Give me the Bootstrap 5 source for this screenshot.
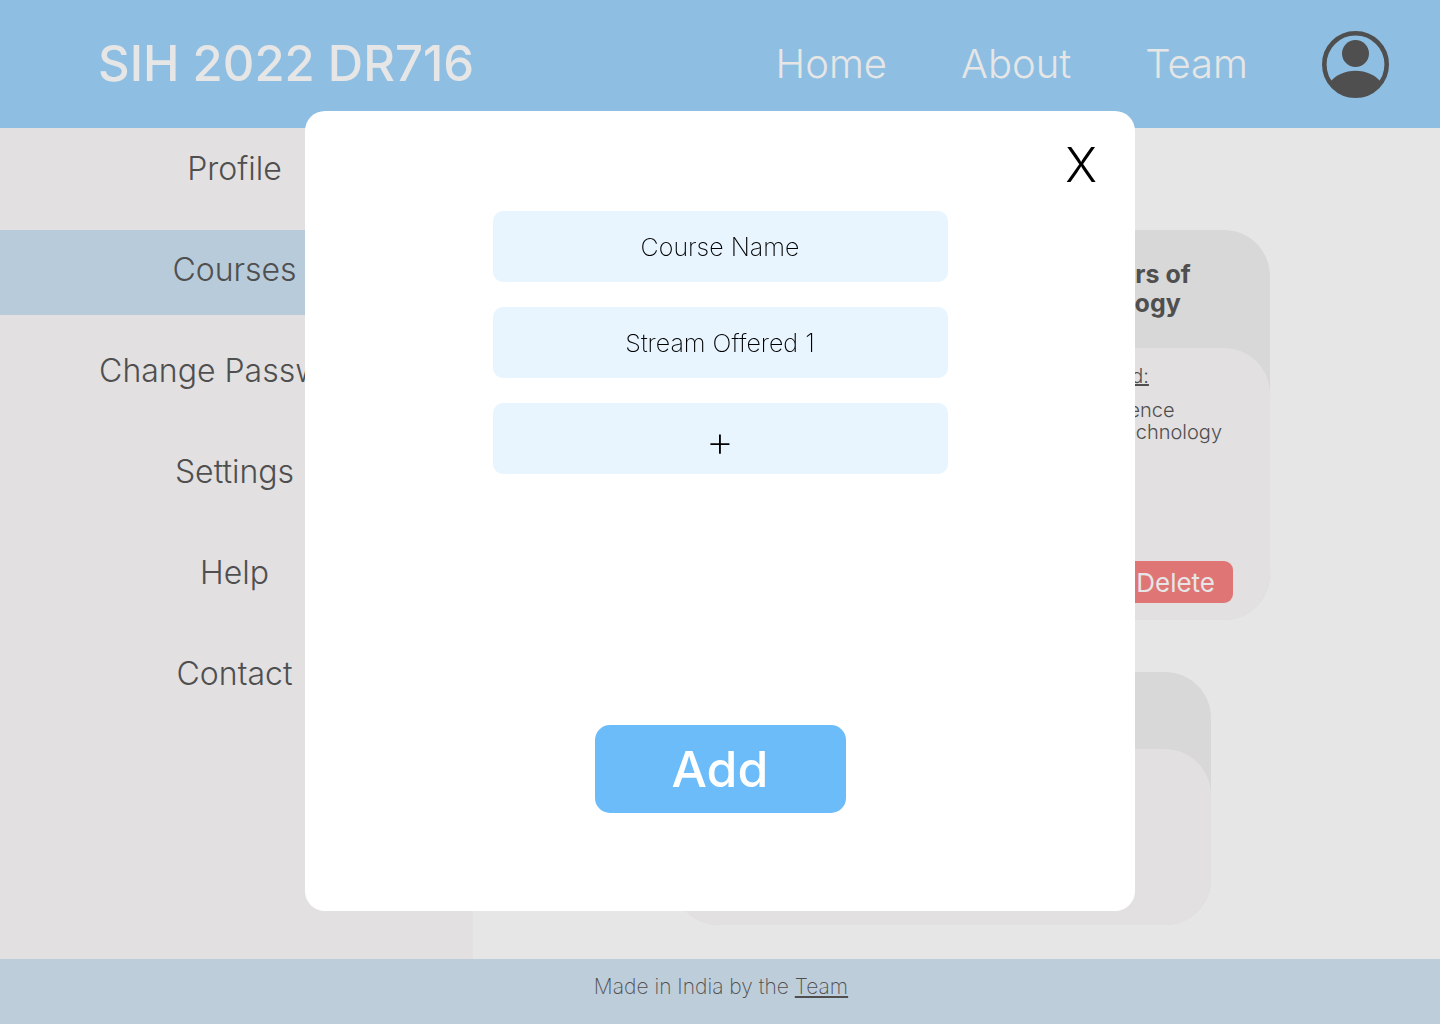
<!DOCTYPE html>
<html lang="en">
<head>
<meta charset="utf-8">
<meta name="viewport" content="width=device-width, initial-scale=1">
<title>SIH 2022 DR716 - Courses</title>
<link href="https://cdn.jsdelivr.net/npm/bootstrap@5.3.0/dist/css/bootstrap.min.css" rel="stylesheet">
<style>
  body { font-family: "Inter", "Open Sans", sans-serif; background: #e6e6e6; color: #4f4f4f; }
  a { color: inherit; }
  .top-bar { background: #8ebfe3; min-height: 128px; padding: 0 51px 0 98px; }
  .top-bar .navbar-brand { color: #e6e6e6; font-size: 49px; font-weight: 500; line-height: 60px; }
  .top-links { gap: 74px; }
  .top-links .nav-link { color: #e6e6e6; font-size: 40px; font-weight: 300; line-height: 44px; }
  .side-menu { width: 473px; flex: none; background: #e2e0e1; gap: 16px; padding-top: 1px; }
  .side-menu .nav-link { color: #4f4f4f; font-size: 32px; font-weight: 300; line-height: 38px; padding: 21px 4px 26px 0; }
  .side-menu .nav-link.active { background: #b8cbda; }
  .catalogue { padding: 102px 170px 34px 0; gap: 52px; }
  .course-tile { background: #d8d8d8; border-radius: 46px; overflow: hidden; width: 318px; }
  .course-title { font-size: 25px; font-weight: 700; line-height: 29px; padding: 30px 50px 30px 85px; }
  .course-info { background: #e2e0e1; border-radius: 46px; min-height: 272px; padding: 17px 37px 17px 50px; }
  .course-info p, .course-info li { font-size: 20px; line-height: 22px; font-weight: 300; white-space: nowrap; }
  .tile-btn { font-size: 26px; line-height: 30px; padding: 7px 18px 5px; border: 0; border-radius: 9px; }
  .tile-btn, .tile-btn:hover { color: #e6e6e6; }
  .edit-btn { background: #8ebfe3; }
  .delete-btn, .delete-btn:hover { background: #e07575; }
  .new-tile { width: 538px; margin-right: 59px; padding-top: 77px; }
  .new-tile-body { background: #e2e0e1; border-radius: 46px; height: 176px; }
  .page-foot { background: #becdda; min-height: 65px; padding: 15px 0 0 2px; font-size: 21px; line-height: 26px; font-weight: 200; }
  .course-dialog { max-width: 830px; margin-top: 111px; }
  .course-form { border: 0; border-radius: 20px; min-height: 800px; padding: 29px 38px 98px; color: #000; }
  .close-btn { font-size: 48px; line-height: 50px; font-weight: 300; color: #000; padding: 0; border: 0; }
  .field-stack { width: 455px; gap: 25px; margin-top: 21px; }
  .field-box, .field-box:focus { background: #e8f5fe; border: 0; border-radius: 10px; height: 71px; font-size: 25px; line-height: 30px; font-weight: 200; text-align: center; color: #000; }
  .field-box::placeholder { color: #000; opacity: 1; }
  .field-box.more-btn { font-size: 44px; line-height: 60px; padding: 8px 0 3px; }
  .add-btn, .add-btn:hover { background: #6bbcf9; color: #fff; width: 251px; height: 88px; border: 0; border-radius: 15px; font-size: 50px; font-weight: 500; line-height: 60px; }
</style>
</head>
<body>
<div class="min-vh-100 d-flex flex-column">
  <header class="top-bar navbar flex-nowrap">
    <a class="navbar-brand p-0 m-0" href="#">SIH 2022 DR716</a>
    <nav class="top-links d-flex align-items-center" aria-label="Main">
      <a class="nav-link" href="#">Home</a>
      <a class="nav-link" href="#">About</a>
      <a class="nav-link" href="#">Team</a>
      <a href="#" aria-label="Account">
        <svg class="d-block" width="67" height="67" viewBox="0 0 67 67" aria-hidden="true">
          <circle cx="33.5" cy="33.5" r="31.2" fill="none" stroke="#4f4f4f" stroke-width="4.6"/>
          <circle cx="33.5" cy="22.5" r="13.5" fill="#4f4f4f"/>
          <path d="M8.5 50.5C14 44 23 39.700 33.500 39.700S53 44 58.500 50.500C53 60 44 66 33.500 66S14 60 8.500 50.500Z" fill="#4f4f4f"/>
        </svg>
      </a>
    </nav>
  </header>

  <div class="d-flex flex-grow-1">
    <nav class="side-menu nav flex-column flex-nowrap text-center" aria-label="Sections">
      <a class="nav-link" href="#">Profile</a>
      <a class="nav-link active" href="#" aria-current="page">Courses</a>
      <a class="nav-link" href="#">Change Password</a>
      <a class="nav-link" href="#">Settings</a>
      <a class="nav-link" href="#">Help</a>
      <a class="nav-link" href="#">Contact</a>
    </nav>
    <main class="catalogue d-flex flex-column align-items-end flex-grow-1">
      <article class="course-tile">
        <h2 class="course-title m-0">Bachelors of Technology</h2>
        <div class="course-info d-flex flex-column">
          <p class="text-decoration-underline mb-2 pb-1">Stream Offered:</p>
          <ul class="list-unstyled m-0"><li>Computer Science</li><li>Information Technology</li></ul>
          <div class="d-flex justify-content-between mt-auto">
            <button type="button" class="btn tile-btn edit-btn">Edit</button>
            <button type="button" class="btn tile-btn delete-btn">Delete</button>
          </div>
        </div>
      </article>
      <div class="course-tile new-tile"><div class="new-tile-body"></div></div>
    </main>
  </div>

  <footer class="page-foot text-center">Made in India by the <a href="#">Team</a></footer>
</div>

<div class="modal d-block" tabindex="-1" role="dialog" aria-label="Add course">
  <div class="modal-dialog course-dialog">
    <form class="modal-content course-form align-items-center">
      <button type="button" class="btn close-btn align-self-end" aria-label="Close">X</button>
      <div class="field-stack d-flex flex-column">
        <input class="form-control field-box" type="text" placeholder="Course Name" aria-label="Course Name">
        <input class="form-control field-box" type="text" placeholder="Stream Offered 1" aria-label="Stream Offered 1">
        <button type="button" class="btn field-box more-btn" aria-label="Add another stream">+</button>
      </div>
      <button type="button" class="btn add-btn mt-auto">Add</button>
    </form>
  </div>
</div>
<script src="https://cdn.jsdelivr.net/npm/bootstrap@5.3.0/dist/js/bootstrap.bundle.min.js"></script>
</body>
</html>
